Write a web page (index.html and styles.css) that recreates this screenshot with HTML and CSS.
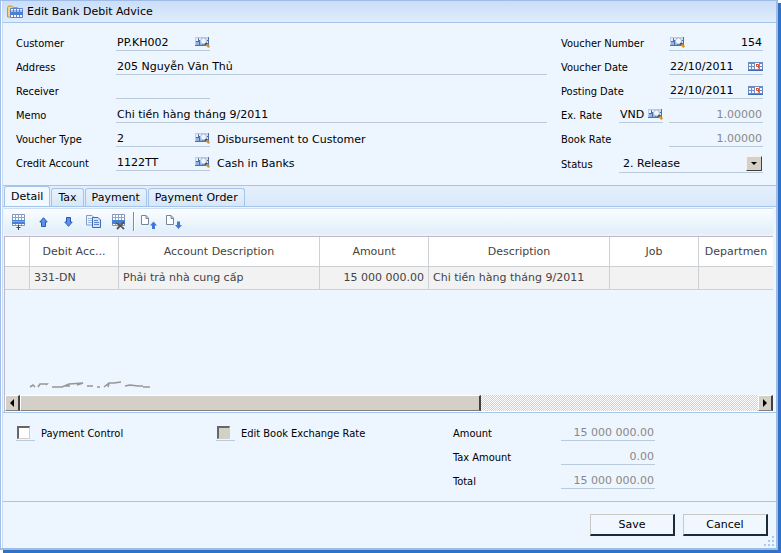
FILE: index.html
```html
<!DOCTYPE html>
<html lang="en">
<head>
<meta charset="utf-8">
<title>Edit Bank Debit Advice</title>
<link rel="stylesheet" href="styles.css">
</head>
<body>
<svg class="defs" aria-hidden="true">
  <symbol id="i-lookup" viewBox="0 0 15 11">
    <path fill="#4d70a8" d="M0 0h14v9H0z"/>
    <path fill="#b4ccf0" d="M0 0h13v1H0zM0 0h1v8H0z"/>
    <path fill="#e6effb" d="M1 1h2v3H1zM4 1h2v2H4z"/>
    <path fill="#8fb2ea" d="M1 5h3v3H1zM5 5h2v3H5z"/>
    <path fill="#cfdff6" d="M11 1h2v2h-2zM12 4h1v2h-1z"/>
    <circle cx="8.500" cy="4" r="3" fill="#f0f6fd" stroke="#b3c3d8"/>
    <path stroke="#4a4a4a" stroke-width="1.600" d="M10.300 6.300l1.500 1.500"/>
    <path stroke="#d9962a" stroke-width="2.400" d="M11.500 7.500l2.700 2.700"/>
  </symbol>
  <symbol id="i-cal" viewBox="0 0 15 9">
    <path fill="#6a8cc4" d="M0 0h15v9H0z"/>
    <path fill="#3f68b8" d="M0 8h15v1H0z"/>
    <path fill="#f2f7fd" d="M1 2h2v2H1zM4 2h2v2H4zM1 5h2v2H1zM4 5h2v2H4zM12 2h2v2h-2zM12 5h2v2h-2z"/>
    <path fill="#fff" d="M7 1h4v6H7z"/>
    <path fill="none" stroke="#e2482d" d="M8 2.500h2.500v4M8.500 2.500v2H10"/>
  </symbol>
</svg>
<form class="window">
  <header class="titlebar">
    <svg width="16" height="14" viewBox="0 0 16 14" aria-hidden="true">
      <path fill="#f3d272" stroke="#c89a35" d="M.5 12V2.500l1-1.500H5l1 1.500h4.500V12z"/>
      <path fill="#f7faff" stroke="#5b86cc" d="M3.500 3.500h12v9h-12z"/>
      <path stroke="#5b86cc" d="M3 6h13M6.500 3v9M9.500 3v9M12.500 3v9"/>
      <path fill="#4a7fd6" d="M3 7h13v3H3z"/>
    </svg>
    <h1>Edit Bank Debit Advice</h1>
  </header>

  <section class="fields">
    <div class="main">
      <div class="row"><label for="cust">Customer</label>
        <span class="box std"><input id="cust" value="PP.KH002"><button type="button" aria-label="Find customer"><svg class="lk"><use href="#i-lookup"/></svg></button></span></div>
      <div class="row"><label for="addr">Address</label>
        <span class="box wide"><input id="addr" value="205 Nguyễn Văn Thủ"></span></div>
      <div class="row"><label for="recv">Receiver</label>
        <span class="box std"><input id="recv"></span></div>
      <div class="row"><label for="memo">Memo</label>
        <span class="box wide"><input id="memo" value="Chi tiền hàng tháng 9/2011"></span></div>
      <div class="row"><label for="vtype">Voucher Type</label>
        <span class="box std"><input id="vtype" value="2"><button type="button" aria-label="Find voucher type"><svg class="lk"><use href="#i-lookup"/></svg></button></span><output>Disbursement to Customer</output></div>
      <div class="row"><label for="cacc">Credit Account</label>
        <span class="box std"><input id="cacc" value="1122TT"><button type="button" aria-label="Find credit account"><svg class="lk"><use href="#i-lookup"/></svg></button></span><output>Cash in Banks</output></div>
    </div>
    <div class="side">
      <div class="row"><label for="vno">Voucher Number</label>
        <span class="box std"><button type="button" aria-label="Find voucher"><svg class="lk"><use href="#i-lookup"/></svg></button><input id="vno" class="num" value="154"></span></div>
      <div class="row"><label for="vdate">Voucher Date</label>
        <span class="box std"><input id="vdate" value="22/10/2011"><button type="button" aria-label="Pick voucher date"><svg class="cal"><use href="#i-cal"/></svg></button></span></div>
      <div class="row"><label for="pdate">Posting Date</label>
        <span class="box std"><input id="pdate" value="22/10/2011"><button type="button" aria-label="Pick posting date"><svg class="cal"><use href="#i-cal"/></svg></button></span></div>
      <div class="row"><label for="cur">Ex. Rate</label>
        <span class="box cur"><input id="cur" value="VND"><button type="button" aria-label="Find currency"><svg class="lk"><use href="#i-lookup"/></svg></button></span>
        <span class="box std"><input class="num" value="1.00000" aria-label="Exchange rate" disabled></span></div>
      <div class="row"><label for="brate">Book Rate</label>
        <span class="box std"><input id="brate" class="num" value="1.00000" disabled></span></div>
      <div class="row status"><label for="status">Status</label>
        <span class="box pick"><select id="status"><option>2. Release</option></select><span class="drop"></span></span></div>
    </div>
  </section>

  <nav class="tabs">
    <button type="button" class="active">Detail</button>
    <button type="button">Tax</button>
    <button type="button">Payment</button>
    <button type="button">Payment Order</button>
  </nav>

  <div class="toolbar">
    <button type="button" aria-label="Insert row"><svg width="15" height="16" viewBox="0 0 15 16">
      <path fill="#fff" stroke="#8093b8" d="M1.500.5h12v11h-12z"/><path stroke="#8fa3c8" d="M1 3.500h13M4.500 0v11M7.500 0v11M10.500 0v11"/>
      <path fill="#4a7fd6" d="M1 6h13v4H1z"/><path fill="#7fa8ec" d="M1 7h13v1H1z"/><path stroke="#444" fill="none" d="M7.500 11v5M5.500 13.500h4"/></svg></button>
    <button type="button" aria-label="Move up"><svg width="9" height="10" viewBox="0 0 9 10"><path fill="#5c92ec" stroke="#2b58b5" d="M4.500.7l3.700 4.300H6.500v4.500h-4V5H.8z"/></svg></button>
    <button type="button" aria-label="Move down"><svg width="9" height="10" viewBox="0 0 9 10"><path fill="#5c92ec" stroke="#2b58b5" d="M4.500 9.300l3.700-4.300H6.500V.5h-4V5H.8z"/></svg></button>
    <button type="button" aria-label="Copy row"><svg width="15" height="13" viewBox="0 0 15 13">
      <path fill="#eef4fc" stroke="#7f9dcb" d="M.5.5H6l2.500 2.500v7h-8z"/><path stroke="#9db6dd" d="M2 3.500h4M2 5.500h4M2 7.500h4"/>
      <path fill="#d5e4f9" stroke="#3f68b0" d="M6.500 2.500H12l2.500 2.500v7.500h-8z"/><path stroke="#5b86cc" d="M8 5.500h4M8 7.500h5M8 9.500h5"/></svg></button>
    <button type="button" aria-label="Delete row"><svg width="15" height="16" viewBox="0 0 15 16">
      <path fill="#fff" stroke="#8093b8" d="M1.500.5h12v11h-12z"/><path stroke="#8fa3c8" d="M1 3.500h13M4.500 0v11M7.500 0v11M10.500 0v11"/>
      <path fill="#4a7fd6" d="M1 6h13v4H1z"/><path fill="none" stroke="#555" stroke-width="1.800" d="M5 9c3 1 5 3 8 6M13 8l-7 7"/></svg></button>
    <span class="sep"></span>
    <button type="button" aria-label="Import"><svg width="16" height="14" viewBox="0 0 16 14"><path fill="#fff" stroke="#76849c" d="M.5.5h4.500l2.500 2.500v6.500h-7zM5 .5v3h2.500"/><path fill="#3f78dc" d="M12.500 6.500l3.500 4h-2V14h-3v-3.500H9z"/></svg></button>
    <button type="button" aria-label="Export"><svg width="16" height="14" viewBox="0 0 16 14"><path fill="#fff" stroke="#76849c" d="M.5.5h4.500l2.500 2.500v6.500h-7zM5 .5v3h2.500"/><path fill="#3f78dc" d="M12.500 14l3.500-4h-2V6.500h-3V10H9z"/></svg></button>
  </div>

  <div class="grid">
    <table>
      <colgroup><col class="c-mark"><col class="c-acc"><col class="c-name"><col class="c-amt"><col class="c-desc"><col class="c-job"><col></colgroup>
      <thead><tr><th></th><th>Debit Acc...</th><th>Account Description</th><th>Amount</th><th>Description</th><th>Job</th><th>Departmen</th></tr></thead>
      <tbody><tr><td></td><td>331-DN</td><td>Phải trả nhà cung cấp</td><td class="num">15 000 000.00</td><td>Chi tiền hàng tháng 9/2011</td><td></td><td></td></tr></tbody>
    </table>
    <svg class="trace" width="124" height="8" viewBox="0 0 124 8" aria-hidden="true">
      <path fill="none" stroke="#969696" stroke-width="1.600" d="M1 6l3-2 2 2M9 6l2-3h7l-1 1M23 6h10l7-3 14-1-6 2M35 5h6M58 5h6M68 6h3M75 6l5-4h5l7-1M80 2l-1 4M96 5l5-1 8 1h5M114 6h7"/>
    </svg>
    <div class="scroll">
      <button type="button" class="bevel arrow left" aria-label="Scroll left"></button>
      <span class="bevel thumb"></span>
      <span class="track"></span>
      <button type="button" class="bevel arrow right" aria-label="Scroll right"></button>
    </div>
  </div>

  <section class="summary">
    <div class="check"><span><input type="checkbox" id="pc"></span><label for="pc">Payment Control</label></div>
    <div class="check"><span><input type="checkbox" id="ebr" disabled></span><label for="ebr">Edit Book Exchange Rate</label></div>
    <div class="totals">
      <div class="row"><label for="amt">Amount</label><span class="box std"><input id="amt" class="num" value="15 000 000.00" disabled></span></div>
      <div class="row"><label for="tax">Tax Amount</label><span class="box std"><input id="tax" class="num" value="0.00" disabled></span></div>
      <div class="row"><label for="tot">Total</label><span class="box std"><input id="tot" class="num" value="15 000 000.00" disabled></span></div>
    </div>
  </section>

  <footer class="actions">
    <button type="submit">Save</button>
    <button type="button">Cancel</button>
    <svg class="grip" width="12" height="12" viewBox="0 0 12 12" aria-hidden="true"><path fill="#a6c8f5" d="M8 0h2v2H8zM4 4h2v2H4zM8 4h2v2H8zM0 8h2v2H0zM4 8h2v2H4zM8 8h2v2H8z"/></svg>
  </footer>
</form>
</body>
</html>
```
FILE: styles.css
```css
* { box-sizing: border-box; }
body {
  margin: 0;
  background: #fff;
  font: 11px/16px "DejaVu Sans", sans-serif;
  color: #000;
}
button, input, select { font: inherit; color: inherit; }
button { padding: 0; border: 0; background: none; }
svg { display: block; }
.defs { display: none; }

.window {
  display: flex;
  flex-direction: column;
  min-height: calc(100vh - 3px);
  margin: 0 3px 3px 0;
  padding-left: 2px;
  border: solid #9fbce8;
  border-width: 1px 2px 2px 1px;
  background: linear-gradient(90deg, #fff 1px, #c9dcf6 1px, #c9dcf6 2px, #edf5ff 2px);
  box-shadow: 3px 3px 0 #3072c8;
}

.titlebar {
  display: flex;
  align-items: center;
  gap: 4px;
  height: 22px;
  padding: 1px 0 0 4px;
  border-bottom: 1px solid #a5c4ea;
  background: linear-gradient(#cadef8, #e0ecfb);
}
h1 { margin: 0; font-size: 11px; font-weight: normal; }

.fields { display: flex; gap: 14px; padding: 4px 13px 12px; }
.main { flex: 1; }
.side { width: 202px; }
.row { display: flex; height: 24px; align-items: stretch; }
.row label { width: 100px; line-height: 34px; }
label { font-family: "DejaVu Sans Condensed", "DejaVu Sans", sans-serif; white-space: nowrap; }
.row output { padding-left: 7px; line-height: 33px; }
.box {
  display: flex;
  align-items: center;
  padding: 9px 0 0 1px;
  border-bottom: 1px solid #b9cbdc;
}
.box input {
  flex: 1;
  min-width: 0;
  height: 14px;
  padding: 0;
  border: 0;
  background: transparent;
}
.box svg { margin-bottom: 2px; }
.std { width: 94px; }
.wide { flex: 1; }
.num { text-align: right; }
.box .num { padding-right: 1px; }
input:disabled { color: #888; }
.lk { width: 15px; height: 11px; }
.cal { width: 15px; height: 9px; }
.side .row { justify-content: space-between; }
.side label { width: auto; flex: 1; }
.cur { width: 44px; margin-right: 6px; }
.side .status { height: 26px; }
.status label { line-height: 36px; }
.pick { position: relative; width: 144px; padding-left: 0; }
.pick select {
  flex: 1;
  height: 16px;
  padding: 0 0 0 4px;
  border: 0;
  background: transparent;
  appearance: none;
}
.drop {
  position: absolute;
  right: 1px;
  bottom: 1px;
  width: 16px;
  height: 15px;
  border: 1px solid;
  border-color: #f4f2ee #404040 #404040 #f4f2ee;
  background: #d4d0c8;
  pointer-events: none;
}
.drop::after {
  content: "";
  position: absolute;
  left: 4px;
  top: 5px;
  border: 3px solid transparent;
  border-top-color: #000;
  border-bottom: 0;
}

.tabs {
  display: flex;
  align-items: flex-end;
  gap: 1px;
  height: 22px;
  padding-left: 1px;
  border: solid #a5c4ea;
  border-width: 1px 0;
  background: linear-gradient(#e4effc, #d9e9fb);
}
.tabs button {
  height: 18px;
  padding: 0 6px;
  border: 1px solid #a5c4ea;
  border-bottom: 0;
  border-radius: 3px 3px 0 0;
  background: linear-gradient(#e9f2fd, #d6e7fa);
}
.tabs .active { height: 20px; background: #f1f8ff; }

.toolbar {
  display: flex;
  align-items: flex-start;
  height: 28px;
  margin: 1px 3px 0 1px;
  padding-left: 2px;
  border-top: 1px solid #cfdff2;
  background: linear-gradient(#fbfdff, #e0effa 24px, #f0eef8 25px);
}
.toolbar button { display: grid; place-items: center; width: 25px; height: 25px; }
.sep { width: 2px; height: 19px; margin: 3px 1px 0 2px; border-left: 1px solid #5b93e0; background: #fff; }

.grid {
  display: flex;
  flex-direction: column;
  flex: 1;
  overflow: hidden;
  margin: 0 3px 0 1px;
  border: solid #b9bccf;
  border-width: 1px 0 0 1px;
}
table { width: 100%; table-layout: fixed; border-collapse: separate; border-spacing: 0; color: #444; }
.c-mark { width: 25px; } .c-acc, .c-job { width: 89px; }
.c-name { width: 201px; } .c-amt { width: 109px; } .c-desc { width: 181px; }
th, td {
  padding: 0 4px;
  border: solid #cdd1d6;
  border-width: 0 1px 1px 0;
  white-space: nowrap;
}
th:last-child, td:last-child { border-right: 0; }
th { height: 30px; background: #fff; font-weight: normal; text-align: center; }
td { height: 23px; background: #f2f2f2; text-align: left; }
td.num { text-align: right; }
.trace { margin: auto 0 6px 24px; }

.scroll { display: flex; height: 17px; border-bottom: 1px solid #fff; }
.bevel {
  border: solid;
  border-width: 1px 2px 1px 1px;
  border-color: #fff #404040 #808080 #fff;
  background: #d4d0c8;
}
.arrow { display: grid; place-items: center; width: 15px; }
.arrow::after { content: ""; border: 4px solid transparent; }
.left::after { border-right-color: #000; border-left: 0; }
.right::after { border-left-color: #000; border-right: 0; }
.thumb { width: 60%; }
.track { flex: 1; background: repeating-conic-gradient(#d4d0c8 0 25%, #fff 0 50%) 0 0 / 2px 2px; }

.summary {
  display: flex;
  height: 90px;
  padding: 4px 13px 0;
  border: solid #a5c4ea;
  border-width: 1px 0;
}
.check { display: flex; width: 200px; height: 24px; }
.check span { width: 19px; margin-right: 6px; padding: 9px 0 0 1px; border-bottom: 1px solid #b9cbdc; }
.check input {
  display: block;
  appearance: none;
  width: 13px;
  height: 13px;
  margin: 0;
  border: solid;
  border-width: 2px 1px 1px 2px;
  border-color: #666 #d4d0c8 #d4d0c8 #666;
  background: #fff;
}
.check input:disabled { background: #d4d0c8; }
.check label { line-height: 34px; }
.totals { margin-left: 37px; }
.totals .row label { width: 108px; }

.actions { position: relative; display: flex; justify-content: flex-end; gap: 8px; height: 46px; padding: 12px 8px 0 0; }
.actions button {
  width: 85px;
  height: 22px;
  border: solid;
  border-width: 1px 2px 2px 1px;
  border-color: #c8c8c4 #1c2b3a #1c2b3a #c8c8c4;
  background: #f0f7ff;
}
.grip { position: absolute; right: 0; bottom: 0; }
```
